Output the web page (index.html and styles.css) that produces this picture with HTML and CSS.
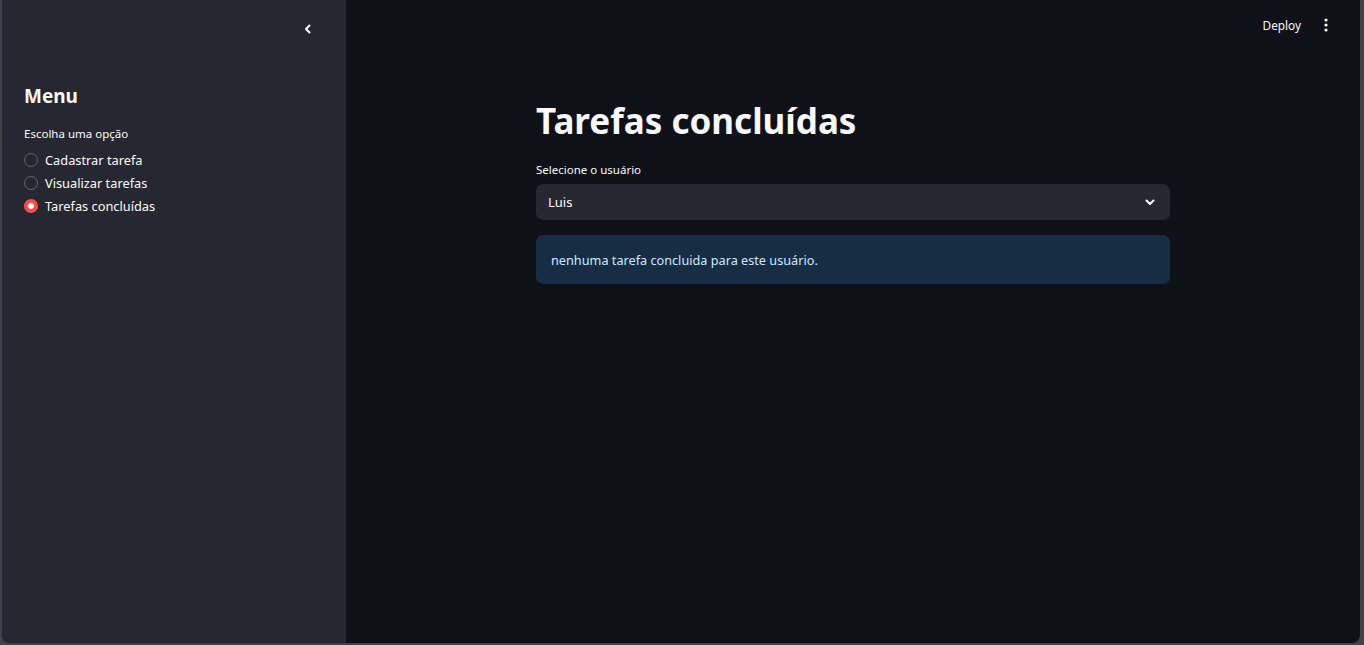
FILE: index.html
```html
<!DOCTYPE html>
<html lang="pt">
<head>
<meta charset="utf-8">
<title>Tarefas</title>
<link rel="stylesheet" href="styles.css">
</head>
<body>
<div class="app">
  <aside class="sidebar">
    <div class="sidebar-top">
      <button class="collapse" aria-label="Recolher">
        <svg width="12" height="12" viewBox="0 0 12 12"><path d="M7.5 2.5 L4 6 L7.5 9.5" fill="none" stroke="#fafafa" stroke-width="2" stroke-linecap="round" stroke-linejoin="round"/></svg>
      </button>
    </div>
    <h2 class="menu-title">Menu</h2>
    <div class="radio-label">Escolha uma opção</div>
    <ul class="radios">
      <li class="radio"><span class="dot"></span>Cadastrar tarefa</li>
      <li class="radio"><span class="dot"></span>Visualizar tarefas</li>
      <li class="radio checked"><span class="dot"></span>Tarefas concluídas</li>
    </ul>
  </aside>
  <main class="main">
    <header class="toolbar">
      <span class="deploy">Deploy</span>
      <span class="kebab">
        <svg width="4" height="14" viewBox="0 0 4 14"><circle cx="2" cy="2" r="1.6" fill="#fafafa"/><circle cx="2" cy="7" r="1.6" fill="#fafafa"/><circle cx="2" cy="12" r="1.6" fill="#fafafa"/></svg>
      </span>
    </header>
    <section class="content">
      <h1 class="title">Tarefas concluídas</h1>
      <div class="field-label">Selecione o usuário</div>
      <div class="select">
        <span>Luis</span>
        <svg width="12" height="12" viewBox="0 0 12 12"><path d="M2.5 4.5 L6 8 L9.5 4.5" fill="none" stroke="#fafafa" stroke-width="2" stroke-linecap="round" stroke-linejoin="round"/></svg>
      </div>
      <div class="info">nenhuma tarefa concluida para este usuário.</div>
    </section>
  </main>
</div>
</body>
</html>
```

FILE: styles.css
```css
* { box-sizing: border-box; }
html, body { margin: 0; height: 100%; }
body {
  background: #424246;
  font-family: "Noto Sans", "Open Sans", sans-serif;
  color: #fafafa;
}
.app {
  display: flex;
  height: 643px;
  margin: 0 4px 0 2px;
  border-radius: 0 0 8px 8px;
  overflow: hidden;
  background: #0e1117;
}
.sidebar {
  width: 344px;
  flex: none;
  background: #262730;
  padding: 0 22px;
}
.sidebar-top {
  height: 58px;
  display: flex;
  justify-content: flex-end;
  align-items: center;
  padding-right: 10px;
}
.collapse {
  background: none;
  border: 0;
  padding: 0;
  width: 12px;
  height: 12px;
  display: flex;
}
.menu-title {
  margin: 26px 0 0;
  font-size: 19px;
  font-weight: 700;
  line-height: 24px;
}
.radio-label {
  margin-top: 18px;
  font-size: 11.5px;
  line-height: 16px;
}
.radios {
  list-style: none;
  margin: 9px 0 0;
  padding: 0;
  display: flex;
  flex-direction: column;
  gap: 5px;
}
.radio {
  display: flex;
  align-items: center;
  gap: 7px;
  font-size: 12.8px;
  line-height: 18px;
}
.dot {
  width: 14px;
  height: 14px;
  border-radius: 50%;
  border: 1px solid #63646c;
  flex: none;
}
.radio.checked .dot {
  border: 0;
  background: radial-gradient(circle, #fff 0 2.6px, #ff4b4b 3.2px);
}
.main {
  flex: 1;
  display: flex;
  flex-direction: column;
}
.toolbar {
  height: 50px;
  display: flex;
  justify-content: flex-end;
  align-items: center;
  gap: 23px;
  padding-right: 32px;
}
.deploy { font-size: 11.8px; }
.kebab { display: flex; }
.content {
  width: 634px;
  margin: 46px auto 0;
}
.title {
  margin: 0;
  font-size: 35px;
  font-weight: 700;
  line-height: 50px;
}
.field-label {
  margin-top: 16px;
  font-size: 11.5px;
  line-height: 16px;
}
.select {
  margin-top: 6px;
  height: 36px;
  background: #262730;
  border-radius: 7px;
  display: flex;
  align-items: center;
  justify-content: space-between;
  padding: 0 14px 0 12px;
  font-size: 13px;
}
.info {
  margin-top: 15px;
  height: 49px;
  border-radius: 7px;
  background: #172d43;
  color: #c7ebff;
  display: flex;
  align-items: center;
  padding: 0 15px;
  font-size: 12.7px;
}
```
